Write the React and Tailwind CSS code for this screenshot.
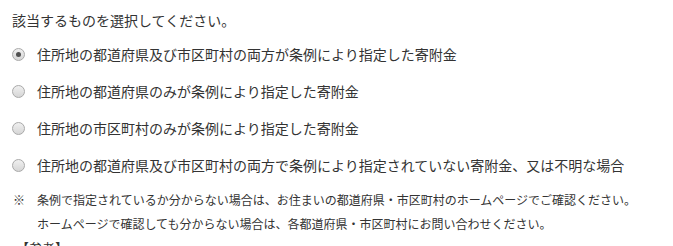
import { useState } from "react";

const options = [
  "住所地の都道府県及び市区町村の両方が条例により指定した寄附金",
  "住所地の都道府県のみが条例により指定した寄附金",
  "住所地の市区町村のみが条例により指定した寄附金",
  "住所地の都道府県及び市区町村の両方で条例により指定されていない寄附金、又は不明な場合",
];

function Radio({ checked }) {
  return (
    <span className="flex h-[13px] w-[13px] shrink-0 items-center justify-center rounded-full border border-[#a9a9a9] bg-gradient-to-b from-[#f0f0f0] to-[#d6d6d6]">
      {checked && <span className="h-[5px] w-[5px] rounded-full bg-[#505050]" />}
    </span>
  );
}

export default function App() {
  const [selected, setSelected] = useState(0);

  return (
    <div
      className="min-h-screen bg-white px-3 pt-[10px] text-[#333333]"
      style={{ fontFamily: '"Noto Sans CJK JP", "Noto Sans", sans-serif' }}
    >
      <p className="text-[14px] leading-[20px]">該当するものを選択してください。</p>

      <ul className="mt-[6px]">
        {options.map((label, i) => (
          <li
            key={i}
            className="flex h-[37px] cursor-pointer items-center"
            onClick={() => setSelected(i)}
          >
            <Radio checked={selected === i} />
            <span className="ml-3 text-[14px]">{label}</span>
          </li>
        ))}
      </ul>

      {/* notes */}
      <div className="mt-1 text-[12px] leading-[24px]">
        <div className="flex">
          <span className="w-[25px] shrink-0 pl-px">※</span>
          <span>条例で指定されているか分からない場合は、お住まいの都道府県・市区町村のホームページでご確認ください。</span>
        </div>
        <div className="pl-[25px]">
          ホームページで確認しても分からない場合は、各都道府県・市区町村にお問い合わせください。
        </div>
      </div>

      <p className="pl-1 text-[13px] leading-[24px]">【参考】</p>
    </div>
  );
}
